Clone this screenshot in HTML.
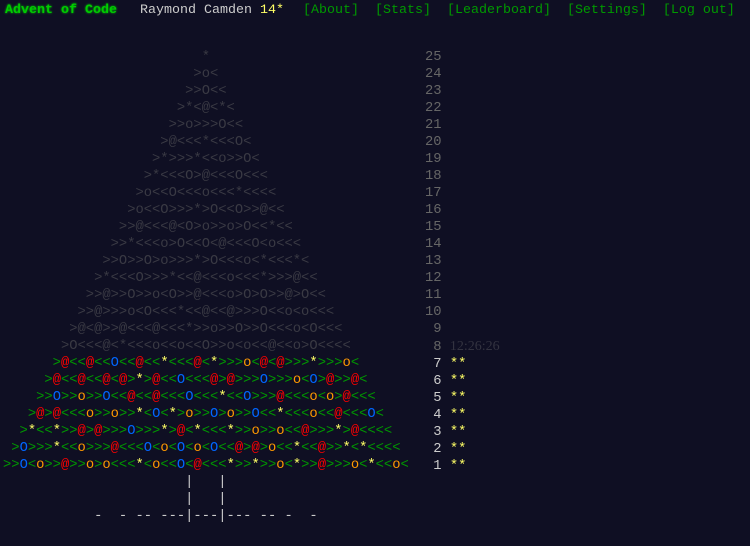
<!DOCTYPE html>
<html><head><meta charset="utf-8"><style>
html,body{margin:0;padding:0;background:#0f0f23;width:750px;height:546px;overflow:hidden}
body{font-family:"Liberation Mono",monospace;color:#cccccc}
.h{position:absolute;top:2px;font-size:13.33px;line-height:18px;white-space:pre}
pre{margin:0;position:absolute;font-family:"Liberation Mono",monospace;font-size:13.8px;line-height:17px}
#tree{left:3px;top:49px;color:#3a3a44}
.lit{color:#009900}
r{color:#ff0000}u{color:#0066ff;text-decoration:none}o{color:#ff9900}y{color:#ffff66}
#num{left:425px;top:49px;color:#666}
#num b{font-weight:normal;color:#cccccc}
#num i{font-style:normal;color:#ffff66}
#num s{text-decoration:none;color:#333340;font-family:"Liberation Serif",serif;font-size:14px}
#trunk{left:3px;top:474px;color:#cccccc}
</style></head><body>
<div class="h" style="left:5px;color:#00cc00;font-weight:bold;text-shadow:0 0 2px #00cc00">Advent of Code</div>
<div class="h" style="left:140px;color:#ccc">Raymond Camden <span style="color:#ffff66">14*</span></div>
<div class="h" style="left:303px;color:#009900">[About]  [Stats]  [Leaderboard]  [Settings]  [Log out]</div>
<pre id="tree">                        *
                       &gt;o&lt;
                      &gt;&gt;O&lt;&lt;
                     &gt;*&lt;@&lt;*&lt;
                    &gt;&gt;o&gt;&gt;&gt;O&lt;&lt;
                   &gt;@&lt;&lt;&lt;*&lt;&lt;&lt;O&lt;
                  &gt;*&gt;&gt;&gt;*&lt;&lt;o&gt;&gt;O&lt;
                 &gt;*&lt;&lt;&lt;O&gt;@&lt;&lt;&lt;O&lt;&lt;&lt;
                &gt;o&lt;&lt;O&lt;&lt;&lt;o&lt;&lt;&lt;*&lt;&lt;&lt;&lt;
               &gt;o&lt;&lt;O&gt;&gt;&gt;*&gt;O&lt;&lt;O&gt;&gt;@&lt;&lt;
              &gt;&gt;@&lt;&lt;&lt;@&lt;O&gt;o&gt;&gt;o&gt;O&lt;&lt;*&lt;&lt;
             &gt;&gt;*&lt;&lt;&lt;o&gt;O&lt;&lt;O&lt;@&lt;&lt;&lt;O&lt;o&lt;&lt;&lt;
            &gt;&gt;O&gt;&gt;O&gt;o&gt;&gt;&gt;*&gt;O&lt;&lt;&lt;o&lt;*&lt;&lt;&lt;*&lt;
           &gt;*&lt;&lt;&lt;O&gt;&gt;&gt;*&lt;&lt;@&lt;&lt;&lt;o&lt;&lt;&lt;*&gt;&gt;&gt;@&lt;&lt;
          &gt;&gt;@&gt;&gt;O&gt;&gt;o&lt;O&gt;&gt;@&lt;&lt;&lt;o&gt;O&gt;O&gt;&gt;@&gt;O&lt;&lt;
         &gt;&gt;@&gt;&gt;&gt;o&lt;O&lt;&lt;&lt;*&lt;&lt;@&lt;&lt;@&gt;&gt;&gt;O&lt;&lt;o&lt;o&lt;&lt;&lt;
        &gt;@&lt;@&gt;&gt;@&lt;&lt;&lt;@&lt;&lt;&lt;*&gt;&gt;o&gt;&gt;O&gt;&gt;O&lt;&lt;&lt;o&lt;O&lt;&lt;&lt;
       &gt;O&lt;&lt;&lt;@&lt;*&lt;&lt;&lt;o&lt;&lt;o&lt;&lt;O&gt;&gt;o&lt;o&lt;&lt;@&lt;&lt;o&gt;O&lt;&lt;&lt;&lt;
<span class="lit">      &gt;<r>@</r>&lt;&lt;<r>@</r>&lt;&lt;<u>O</u>&lt;&lt;<r>@</r>&lt;&lt;<y>*</y>&lt;&lt;&lt;<r>@</r>&lt;<y>*</y>&gt;&gt;&gt;<o>o</o>&lt;<r>@</r>&lt;<r>@</r>&gt;&gt;&gt;<y>*</y>&gt;&gt;&gt;<o>o</o>&lt;
     &gt;<r>@</r>&lt;&lt;<r>@</r>&lt;&lt;<r>@</r>&lt;<r>@</r>&gt;<y>*</y>&gt;<r>@</r>&lt;&lt;<u>O</u>&lt;&lt;&lt;<r>@</r>&gt;<r>@</r>&gt;&gt;&gt;<u>O</u>&gt;&gt;&gt;<o>o</o>&lt;<u>O</u>&gt;<r>@</r>&gt;&gt;<r>@</r>&lt;
    &gt;&gt;<u>O</u>&gt;&gt;<o>o</o>&gt;&gt;<u>O</u>&lt;&lt;<r>@</r>&lt;&lt;<r>@</r>&lt;&lt;&lt;<u>O</u>&lt;&lt;&lt;<y>*</y>&lt;&lt;<u>O</u>&gt;&gt;&gt;<r>@</r>&lt;&lt;&lt;<o>o</o>&lt;<o>o</o>&gt;<r>@</r>&lt;&lt;&lt;
   &gt;<r>@</r>&gt;<r>@</r>&lt;&lt;&lt;<o>o</o>&gt;&gt;<o>o</o>&gt;&gt;<y>*</y>&lt;<u>O</u>&lt;<y>*</y>&gt;<o>o</o>&gt;&gt;<u>O</u>&gt;<o>o</o>&gt;&gt;<u>O</u>&lt;&lt;<y>*</y>&lt;&lt;&lt;<o>o</o>&lt;&lt;<r>@</r>&lt;&lt;&lt;<u>O</u>&lt;
  &gt;<y>*</y>&lt;&lt;<y>*</y>&gt;&gt;<r>@</r>&gt;<r>@</r>&gt;&gt;&gt;<u>O</u>&gt;&gt;&gt;<y>*</y>&gt;<r>@</r>&lt;<y>*</y>&lt;&lt;&lt;<y>*</y>&gt;&gt;<o>o</o>&gt;&gt;<o>o</o>&lt;&lt;<r>@</r>&gt;&gt;&gt;<y>*</y>&gt;<r>@</r>&lt;&lt;&lt;&lt;
 &gt;<u>O</u>&gt;&gt;&gt;<y>*</y>&lt;&lt;<o>o</o>&gt;&gt;&gt;<r>@</r>&lt;&lt;&lt;<u>O</u>&lt;<o>o</o>&lt;<u>O</u>&lt;<o>o</o>&lt;<u>O</u>&lt;&lt;<r>@</r>&gt;<r>@</r>&gt;<o>o</o>&lt;&lt;<y>*</y>&lt;&lt;<r>@</r>&gt;&gt;<y>*</y>&lt;<y>*</y>&lt;&lt;&lt;&lt;
&gt;&gt;<u>O</u>&lt;<o>o</o>&gt;&gt;<r>@</r>&gt;&gt;<o>o</o>&gt;<o>o</o>&lt;&lt;&lt;<y>*</y>&lt;<o>o</o>&lt;&lt;<u>O</u>&lt;<r>@</r>&lt;&lt;&lt;<y>*</y>&gt;&gt;<y>*</y>&gt;&gt;<o>o</o>&lt;<y>*</y>&gt;&gt;<r>@</r>&gt;&gt;&gt;<o>o</o>&lt;<y>*</y>&lt;&lt;<o>o</o>&lt;</span></pre>
<pre id="num">25
24
23
22
21
20
19
18
17
16
15
14
13
12
11
10
 9
 8 <s>12:26:26</s>
<b> 7</b> <i>**</i>
<b> 6</b> <i>**</i>
<b> 5</b> <i>**</i>
<b> 4</b> <i>**</i>
<b> 3</b> <i>**</i>
<b> 2</b> <i>**</i>
<b> 1</b> <i>**</i></pre>
<pre id="trunk">                      |   |
                      |   |
           -  - -- ---|---|--- -- -  -</pre>
</body></html>
